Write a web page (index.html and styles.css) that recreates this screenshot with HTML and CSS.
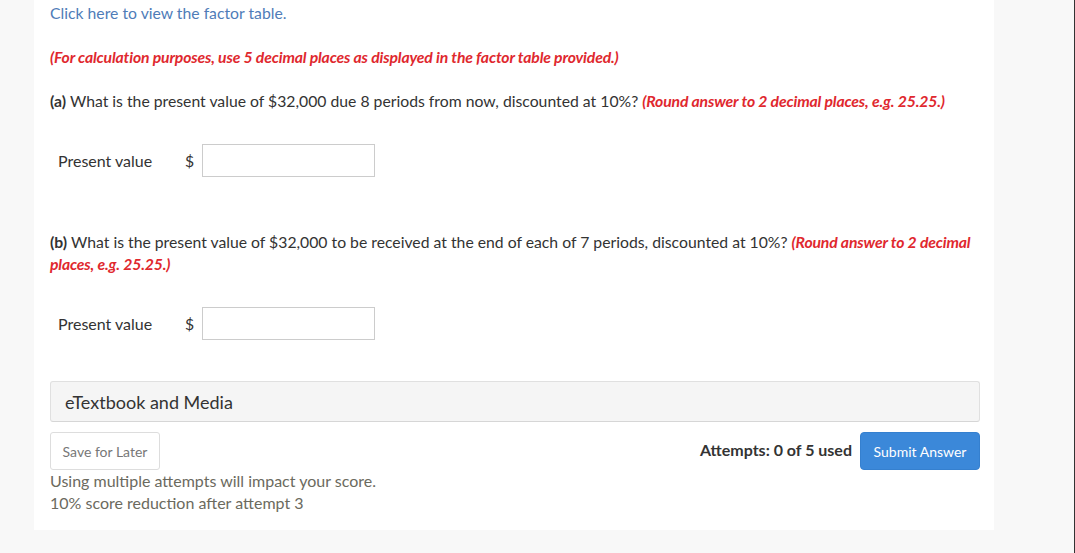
FILE: index.html
```html
<!DOCTYPE html>
<html>
<head>
<meta charset="utf-8">
<link rel="stylesheet" href="styles.css">
</head>
<body>
<div class="frame">
  <div class="panel">
    <p class="link"><a href="#">Click here to view the factor table.</a></p>
    <p class="note">(For calculation purposes, use 5 decimal places as displayed in the factor table provided.)</p>
    <p class="question"><b>(a)</b> What is the present value of $32,000 due 8 periods from now, discounted at 10%? <em class="red">(Round answer to 2 decimal places, e.g. 25.25.)</em></p>
    <div class="answer">
      <span class="label">Present value</span>
      <span class="dollar">$</span>
      <input class="field" type="text">
    </div>
    <p class="question qb"><b>(b)</b> What is the present value of $32,000 to be received at the end of each of 7 periods, discounted at 10%? <em class="red">(Round answer to 2 decimal places, e.g. 25.25.)</em></p>
    <div class="answer">
      <span class="label">Present value</span>
      <span class="dollar">$</span>
      <input class="field" type="text">
    </div>
    <div class="media">eTextbook and Media</div>
    <div class="actions">
      <button class="save">Save for Later</button>
      <div class="right">
        <span class="attempts">Attempts: 0 of 5 used</span>
        <button class="submit">Submit Answer</button>
      </div>
    </div>
    <p class="warning">Using multiple attempts will impact your score.<br>10% score reduction after attempt 3</p>
  </div>
</div>
</body>
</html>
```
FILE: styles.css
```css
html, body {
  margin: 0;
  padding: 0;
  background: #f8f8f8;
  height: 100%;
}
body {
  font-family: Lato, "Open Sans", sans-serif;
  color: #333;
  font-size: 15.75px;
}
.frame {
  height: 553px;
  border-right: 1px solid #333;
  box-sizing: border-box;
}
.panel {
  margin-left: 34px;
  width: 960px;
  box-sizing: border-box;
  background: #fff;
  padding: 2px 14px 16px 16px;
}
p {
  margin: 0;
  line-height: 22px;
}
.link a {
  color: #4f7cb8;
  text-decoration: none;
}
.note {
  margin-top: 22px;
  color: #e0282e;
  font-weight: bold;
  font-style: italic;
  letter-spacing: -0.15px;
}
.question {
  margin-top: 22px;
}
.question b {
  font-weight: bold;
}
.qb {
  margin-top: 54px;
}
.red {
  color: #e0282e;
  font-weight: bold;
  font-style: italic;
  letter-spacing: -0.15px;
}
.answer {
  display: flex;
  align-items: center;
  margin-top: 32px;
  padding-left: 8px;
}
.label {
  width: 127px;
  font-size: 16px;
}
.dollar {
  width: 17px;
}
.field {
  width: 173px;
  height: 33px;
  box-sizing: border-box;
  border: 1px solid #ccc;
  margin: 0;
  padding: 0 6px;
  font: inherit;
}
.media {
  margin-top: 41px;
  height: 41px;
  box-sizing: border-box;
  background: #f5f5f5;
  border: 1px solid #e0e0e0;
  border-bottom-color: #d6d6d6;
  border-radius: 3px;
  display: flex;
  align-items: center;
  padding-left: 14px;
  font-size: 18px;
}
.actions {
  margin-top: 10px;
  display: flex;
  justify-content: space-between;
  align-items: center;
}
.save {
  width: 110px;
  height: 38px;
  background: #fff;
  border: 1px solid #ddd;
  border-radius: 3px;
  color: #777;
  font-family: Lato, sans-serif;
  font-size: 14px;
  padding: 0;
}
.right {
  display: flex;
  align-items: center;
  gap: 8px;
}
.attempts {
  font-weight: bold;
  font-size: 16px;
  margin-top: -3px;
}
.submit {
  width: 120px;
  height: 38px;
  background: #3b88d9;
  border: 1px solid #3580cf;
  border-radius: 4px;
  color: #fff;
  font-family: Lato, sans-serif;
  font-size: 14px;
  padding: 0;
}
.warning {
  color: #6b6a5e;
  font-size: 16px;
}
```
